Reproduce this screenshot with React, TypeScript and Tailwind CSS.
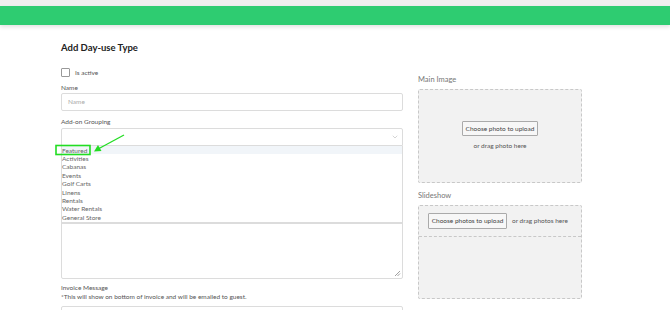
import { ChevronDown } from "lucide-react";

const GROUPS = [
  "Featured",
  "Activities",
  "Cabanas",
  "Events",
  "Golf Carts",
  "Linens",
  "Rentals",
  "Water Rentals",
  "General Store",
];

export default function App() {
  return (
    <div
      className="relative h-[310px] w-[670px] overflow-hidden bg-white text-[#555]"
      style={{ fontFamily: "Lato, 'Open Sans', Arial, sans-serif" }}
    >
      {/* header */}
      <div className="h-[6px] bg-[#efefef]" />
      <div className="h-[19px] bg-[#2ecc71] shadow-[0_2px_4px_rgba(0,0,0,0.12)]" />

      <div className="pl-[61px] pt-[17px]">
        <h1 className="text-[9.5px] font-bold leading-[12px] text-[#222]">Add Day-use Type</h1>

        <div className="mt-[14px] flex gap-[15px]">
          {/* left column */}
          <div className="w-[342px]">
            <label className="flex h-[9px] items-center gap-[5px] text-[6.5px]">
              <span className="h-[9px] w-[9px] rounded-[1px] border border-[#999] bg-white" />
              Is active
            </label>

            <div className="mt-[7px] text-[6.5px] leading-[8px]">Name</div>
            <div className="mt-[1px] flex h-[18px] items-center rounded-[2px] border border-[#dcdcdc] px-[6px] text-[6.5px] text-[#aaa]">
              Name
            </div>

            <div className="mt-[7px] text-[6.5px] leading-[8px]">Add-on Grouping</div>
            <div className="relative mt-[2px]">
              <div className="flex h-[18px] items-center justify-end rounded-t-[2px] border border-[#dcdcdc] pr-[3px]">
                <ChevronDown size={8} strokeWidth={1.5} className="text-[#aaa]" />
              </div>

              {/* open dropdown list */}
              <div className="absolute left-0 right-0 top-full z-10 border-x border-b-2 border-[#dcdcdc] bg-white">
                {GROUPS.map((g, i) => (
                  <div
                    key={g}
                    className={`flex h-[8.4px] items-center text-[6.5px] leading-[7px] text-[#666] ${
                      i === 0 ? "bg-[#f1f5f9]" : ""
                    }`}
                  >
                    {g}
                  </div>
                ))}
              </div>
            </div>

            {/* description textarea (its label sits under the open list) */}
            <div className="relative mt-[16px] h-[117px] rounded-[2px] border border-[#dcdcdc]">
              <svg
                className="absolute bottom-[1px] right-[1px]"
                width="7"
                height="7"
                viewBox="0 0 7 7"
              >
                <path d="M6 1 L1 6 M6 3.5 L3.5 6" stroke="#888" strokeWidth="0.8" />
              </svg>
            </div>

            <div className="mt-[5px] text-[6.5px] leading-[8px]">Invoice Message</div>
            <div className="mt-[1px] text-[6.5px] leading-[8px]">
              *This will show on bottom of invoice and will be emailed to guest.
            </div>
            <div className="mt-[5px] h-[18px] rounded-[2px] border border-[#dcdcdc]" />
          </div>

          {/* right column */}
          <div className="w-[164px] pt-[7px]">
            <div className="text-[7.5px] leading-[9px] text-[#777]">Main Image</div>
            <div className="mt-[5px] flex h-[94px] flex-col items-center justify-center rounded-[2px] border border-dashed border-[#c8c8c8] bg-[#f2f2f2]">
              <button className="h-[15px] w-[76px] rounded-[1px] border border-[#aaa] bg-[#f7f7f7] text-[6.5px] text-[#444]">
                Choose photo to upload
              </button>
              <div className="mt-[5px] text-[6.5px] text-[#555]">or drag photo here</div>
            </div>

            <div className="mt-[8px] text-[7.5px] leading-[9px] text-[#777]">Slideshow</div>
            <div className="mt-[5px] h-[94px] rounded-[2px] border border-dashed border-[#c8c8c8] bg-[#f2f2f2]">
              <div className="flex h-[31px] items-center gap-[5px] border-b border-dashed border-[#c8c8c8] pl-[9px]">
                <button className="h-[16px] w-[79px] rounded-[1px] border border-[#aaa] bg-[#f7f7f7] text-[6.5px] text-[#444]">
                  Choose photos to upload
                </button>
                <span className="text-[6.5px] text-[#555]">or drag photos here</span>
              </div>
            </div>
          </div>
        </div>
      </div>

      {/* annotation: highlight box and arrow */}
      <svg className="pointer-events-none absolute left-0 top-0 z-20" width="670" height="310">
        <rect x="56" y="145.5" width="34" height="9" fill="none" stroke="#22dd22" strokeWidth="1.6" />
        <line x1="124" y1="135" x2="99" y2="148.5" stroke="#22dd22" strokeWidth="1.3" />
        <polygon points="94,151.5 98,145 101.5,151" fill="#22dd22" />
      </svg>
    </div>
  );
}
